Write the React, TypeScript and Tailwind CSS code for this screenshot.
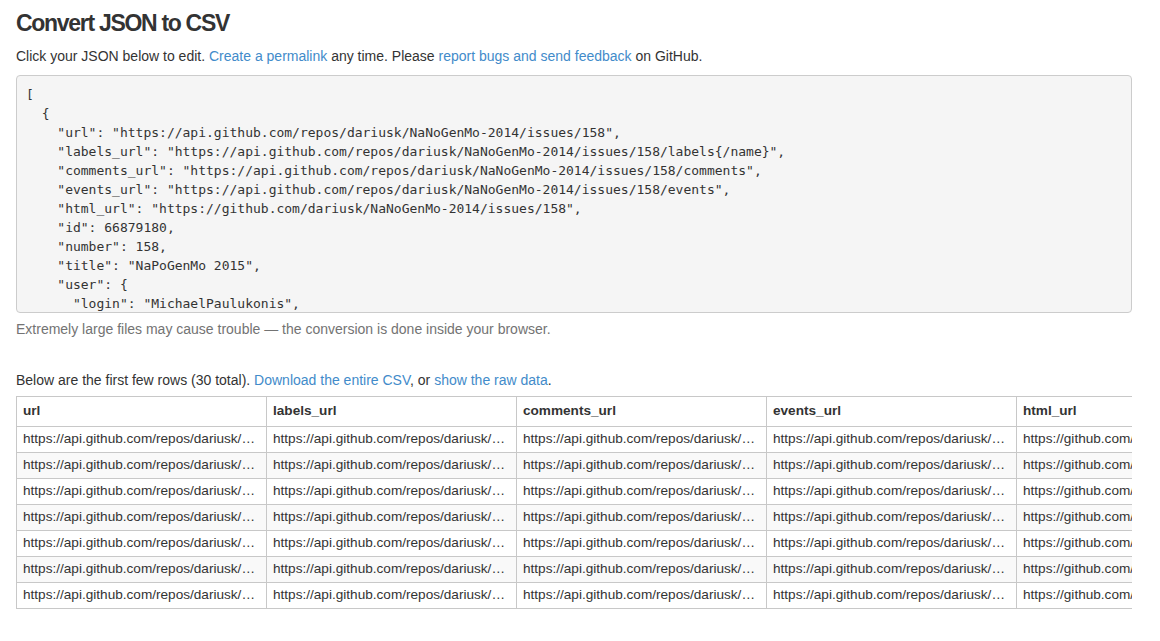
import React from "react";

const jsonLines = [
  "[",
  "  {",
  '    "url": "https://api.github.com/repos/dariusk/NaNoGenMo-2014/issues/158",',
  '    "labels_url": "https://api.github.com/repos/dariusk/NaNoGenMo-2014/issues/158/labels{/name}",',
  '    "comments_url": "https://api.github.com/repos/dariusk/NaNoGenMo-2014/issues/158/comments",',
  '    "events_url": "https://api.github.com/repos/dariusk/NaNoGenMo-2014/issues/158/events",',
  '    "html_url": "https://github.com/dariusk/NaNoGenMo-2014/issues/158",',
  '    "id": 66879180,',
  '    "number": 158,',
  '    "title": "NaPoGenMo 2015",',
  '    "user": {',
  '      "login": "MichaelPaulukonis",',
  '      "id": 1064318,',
];

const columns = ["url", "labels_url", "comments_url", "events_url", "html_url", "id", "number"];

const rowData = [
  "https://api.github.com/repos/dariusk/NaNoGenMo-2014/issues/158",
  "https://api.github.com/repos/dariusk/NaNoGenMo-2014/issues/158/labels{/name}",
  "https://api.github.com/repos/dariusk/NaNoGenMo-2014/issues/158/comments",
  "https://api.github.com/repos/dariusk/NaNoGenMo-2014/issues/158/events",
  "https://github.com/dariusk/NaNoGenMo-2014/issues/158",
  "66879180",
  "158",
];

const rows = Array.from({ length: 7 }, (_, i) => i);

const App = () => {
  return (
    <div className="min-h-[641px] bg-white px-4 pt-[10px] text-[14px] text-[#333] font-['Liberation_Sans',Arial,sans-serif]">
      <div className="w-[1116px]">
        {/* HEADER */}
        <h1 className="text-[23px] font-bold leading-[26px] tracking-[-1.3px] text-[#333]">
          Convert JSON to CSV
        </h1>
        <p className="mt-[10px] leading-5">
          Click your JSON below to edit.{" "}
          <a href="#" className="text-[#428bca]">Create a permalink</a> any time. Please{" "}
          <a href="#" className="text-[#428bca]">report bugs and send feedback</a> on GitHub.
        </p>

        {/* JSON EDITOR */}
        <div className="mt-[9px] h-[238px] overflow-hidden rounded border border-[#ccc] bg-[#f5f5f5] px-[9px] pt-[9px]">
          <pre className="font-['DejaVu_Sans_Mono',Menlo,monospace] text-[13px] leading-[19px] text-[#333]">
            {jsonLines.join("\n")}
          </pre>
        </div>
        <p className="mt-[6px] leading-5 text-[#737373]">
          Extremely large files may cause trouble — the conversion is done inside your browser.
        </p>

        {/* TABLE */}
        <p className="mt-[31px] leading-5">
          Below are the first few rows (30 total).{" "}
          <a href="#" className="text-[#428bca]">Download the entire CSV</a>, or{" "}
          <a href="#" className="text-[#428bca]">show the raw data</a>.
        </p>
        <div className="mt-[6px] w-[1116px] overflow-hidden">
          <table className="table-fixed border-collapse text-[13.6px]">
            <thead>
              <tr>
                {columns.map((c) => (
                  <th
                    key={c}
                    className="h-[30px] w-[250px] min-w-[250px] max-w-[250px] border border-[#c8c8c8] pl-[6px] pr-[4px] text-left font-bold"
                  >
                    {c}
                  </th>
                ))}
              </tr>
            </thead>
            <tbody>
              {rows.map((r) => (
                <tr key={r} className={r % 2 === 1 ? "bg-[#f9f9f9]" : "bg-white"}>
                  {rowData.map((v, i) => (
                    <td
                      key={i}
                      className="h-[26px] w-[250px] min-w-[250px] max-w-[250px] overflow-hidden text-ellipsis whitespace-nowrap border border-[#c8c8c8] pl-[6px] pr-[4px]"
                    >
                      {v}
                    </td>
                  ))}
                </tr>
              ))}
            </tbody>
          </table>
        </div>
      </div>
    </div>
  );
};

export default App;
